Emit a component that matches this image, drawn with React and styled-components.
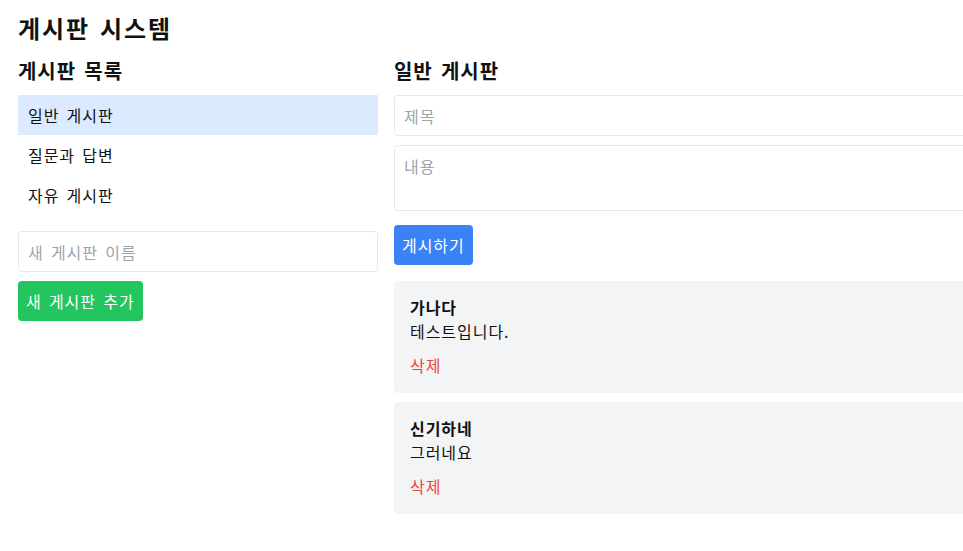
import React from "react";
import styled, { createGlobalStyle } from "styled-components";

const Global = createGlobalStyle`
  html, body { margin: 0; padding: 0; background: #fff; overflow: hidden; }
  body {
    font-family: "Noto Sans CJK KR", "Noto Sans", sans-serif;
    color: #111;
    letter-spacing: 0.06em;
    word-spacing: 0.17em;
  }
  * { box-sizing: border-box; }
`;

const Page = styled.div`
  padding: 10px 18px;
  width: 1500px;
`;

const Title = styled.h1`
  margin: 0;
  font-size: 24px;
  line-height: 36px;
  font-weight: 700;
  letter-spacing: 0.08em;
`;

const Layout = styled.div`
  display: grid;
  grid-template-columns: 360px 1080px;
  gap: 16px;
  margin-top: 11px;
`;

const Column = styled.div`
  display: flex;
  flex-direction: column;
`;

const SectionTitle = styled.h2`
  margin: 0 0 10px;
  font-size: 20px;
  line-height: 28px;
  font-weight: 700;
`;

const BoardList = styled.ul`
  list-style: none;
  margin: 0 0 16px;
  padding: 0;
`;

const BoardItem = styled.li`
  height: 40px;
  padding: 0 10px;
  display: flex;
  align-items: center;
  font-size: 16px;
  background: ${(p) => (p.$active ? "#dbeafe" : "transparent")};
`;

const Input = styled.input`
  width: 100%;
  height: 41px;
  border: 1px solid #e5e7eb;
  border-radius: 4px;
  padding: 0 9px;
  font: inherit;
  font-size: 16px;
  letter-spacing: 0.06em;
  word-spacing: 0.17em;
  margin-bottom: 9px;
  &::placeholder { color: #9ca3af; }
`;

const TextArea = styled.textarea`
  width: 100%;
  height: 66px;
  border: 1px solid #e5e7eb;
  border-radius: 4px;
  padding: 8px 9px;
  font: inherit;
  font-size: 16px;
  line-height: 24px;
  letter-spacing: 0.06em;
  resize: none;
  margin-bottom: 14px;
  &::placeholder { color: #9ca3af; }
`;

const Button = styled.button`
  align-self: flex-start;
  height: 40px;
  padding: 0 8px;
  border: none;
  border-radius: 4px;
  color: #fff;
  font: inherit;
  font-size: 16px;
  letter-spacing: 0.06em;
  word-spacing: 0.17em;
  background: ${(p) => p.$color};
`;

const Posts = styled.div`
  display: flex;
  flex-direction: column;
  gap: 9px;
  margin-top: 16px;
`;

const Card = styled.div`
  background: #f3f4f6;
  border-radius: 4px;
  padding: 14px 16px 16px;
  font-size: 16px;
  line-height: 24px;
`;

const PostTitle = styled.div`
  font-weight: 700;
`;

const Delete = styled.button`
  margin-top: 10px;
  padding: 0;
  border: none;
  background: none;
  color: #ef4444;
  font: inherit;
  font-size: 16px;
  line-height: 24px;
  letter-spacing: 0.06em;
  display: block;
`;

const boards = ["일반 게시판", "질문과 답변", "자유 게시판"];
const posts = [
  { t: "가나다", b: "테스트입니다." },
  { t: "신기하네", b: "그러네요" },
];

export default function App() {
  return (
    <>
      <Global />
      <Page>
        <Title>게시판 시스템</Title>
        <Layout>
          <Column>
            <SectionTitle>게시판 목록</SectionTitle>
            <BoardList>
              {boards.map((b, i) => (
                <BoardItem key={b} $active={i === 0}>{b}</BoardItem>
              ))}
            </BoardList>
            <Input placeholder="새 게시판 이름" />
            <Button $color="#22c55e">새 게시판 추가</Button>
          </Column>
          <Column>
            <SectionTitle>일반 게시판</SectionTitle>
            <Input placeholder="제목" />
            <TextArea placeholder="내용" />
            <Button $color="#3b82f6">게시하기</Button>
            <Posts>
              {posts.map((p) => (
                <Card key={p.t}>
                  <PostTitle>{p.t}</PostTitle>
                  <div>{p.b}</div>
                  <Delete>삭제</Delete>
                </Card>
              ))}
            </Posts>
          </Column>
        </Layout>
      </Page>
    </>
  );
}
